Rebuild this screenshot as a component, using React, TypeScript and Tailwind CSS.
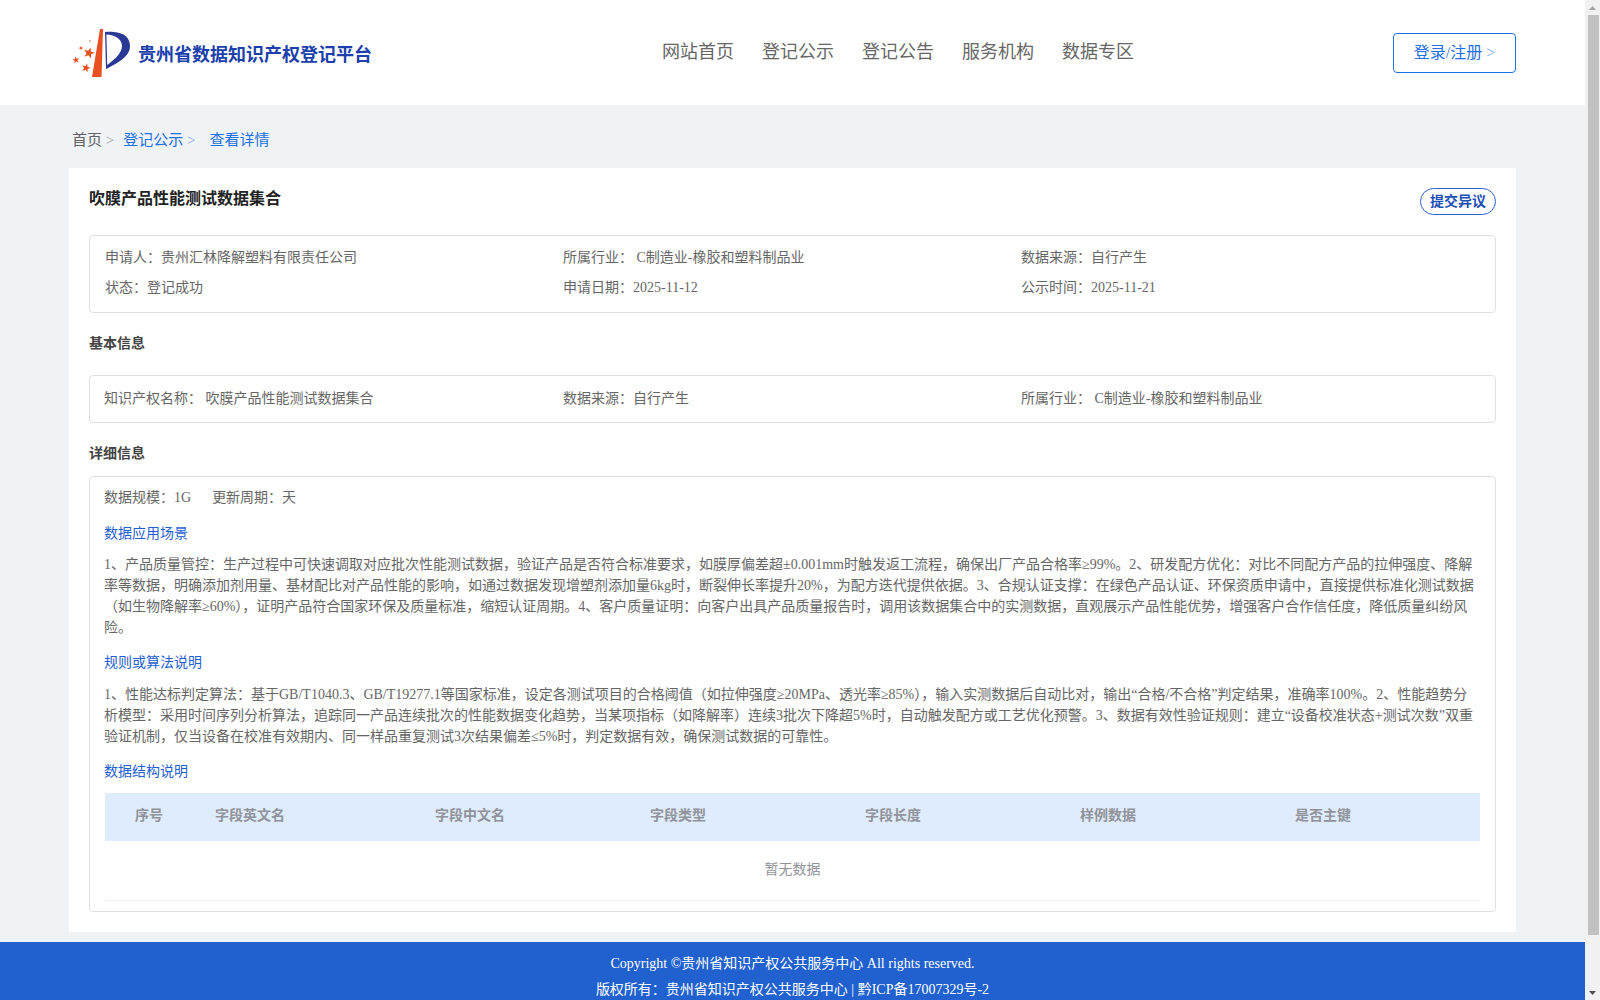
import React from 'react';

const font = 'font-["Liberation_Serif","Noto_Sans_CJK_SC",serif]';

const columns = [
  { label: '序号', w: 'w-[110px]', pl: 'pl-[30px]' },
  { label: '字段英文名', w: 'w-[220px]', pl: 'pl-0' },
  { label: '字段中文名', w: 'w-[215px]', pl: 'pl-0' },
  { label: '字段类型', w: 'w-[215px]', pl: 'pl-0' },
  { label: '字段长度', w: 'w-[215px]', pl: 'pl-0' },
  { label: '样例数据', w: 'w-[215px]', pl: 'pl-0' },
  { label: '是否主键', w: 'w-[150px]', pl: 'pl-0' },
];

// five pointed star for the logo
const starPoints = (cx: number, cy: number, r: number, rot: number) =>
  Array.from({ length: 10 }, (_, i) => {
    const radius = i % 2 === 0 ? r : r * 0.42;
    const a = ((rot + i * 36 - 90) * Math.PI) / 180;
    return `${(cx + radius * Math.cos(a)).toFixed(2)},${(cy + radius * Math.sin(a)).toFixed(2)}`;
  }).join(' ');

const Logo = () => (
  <svg width="66" height="58" viewBox="0 0 66 58" className="shrink-0">
    <polygon points="32,5 35,5 33.5,53 24,53" fill="#e8501f" />
    <path
      fillRule="evenodd"
      d="M37 8 C50 7 62 10 62 22 C62 33 49 39 38.5 45 L38 45 Z M38.4 10.5 L39.2 41 C47 35 54 29 54 22 C54 15 47 11 38.4 10.5 Z"
      fill="#2a3a94"
    />
    <polygon points={starPoints(21, 29, 5.8, 15)} fill="#e8501f" />
    <polygon points={starPoints(8, 36, 3.6, -10)} fill="#e8501f" />
    <polygon points={starPoints(18, 44, 4.6, 15)} fill="#e8501f" />
    <circle cx="13" cy="24" r="1.6" fill="#ee6a43" />
    <circle cx="22" cy="17" r="1.1" fill="#f0a48a" />
  </svg>
);

export default function App() {
  return (
    <div className={`${font} flex h-[1000px] overflow-hidden bg-[#eff3f6]`}>
      <div className="flex-1 min-w-0">
        {/* Header */}
        <header className="h-[105px] bg-white flex items-center pl-[68px] pr-[69px]">
          <div className="flex items-center w-[594px]">
            <Logo />
            <span className="ml-[4px] mt-[6px] text-[18px] font-bold text-[#1b3fab]">贵州省数据知识产权登记平台</span>
          </div>
          <nav className="flex gap-[28px] text-[18px] text-[#666] -mt-[1px]">
            <span>网站首页</span>
            <span>登记公示</span>
            <span>登记公告</span>
            <span>服务机构</span>
            <span>数据专区</span>
          </nav>
          <button className="ml-auto w-[123px] h-[40px] rounded-[4px] border border-[#1f6fe5] text-[16px] text-[#1f6fe5] bg-white">
            登录/注册 <span className="opacity-60">&gt;</span>
          </button>
        </header>

        {/* Breadcrumb */}
        <div className="h-[63px] pl-[72px] pt-[25px] text-[15px] leading-[20px] text-[#606266]">
          <span>首页 <span className="opacity-60">&gt;</span></span>
          <span className="ml-[9px] text-[#1f6fe5]">登记公示 <span className="opacity-60">&gt;</span></span>
          <span className="ml-[14px] text-[#1f6fe5]">查看详情</span>
        </div>

        <main className="mx-[69px] w-[1447px] h-[764px] bg-white px-[20px] pt-[20px]">
          <div className="flex justify-between h-[47px]">
            <h1 className="text-[16px] font-bold text-[#222] leading-[22px]">吹膜产品性能测试数据集合</h1>
            <button className="w-[76px] h-[27px] rounded-[14px] border border-[#2a62cf] text-[14px] font-bold text-[#1a4fb5] bg-white">提交异议</button>
          </div>

          <div className="h-[78px] rounded-[4px] border border-[#e0e0e0] pl-[15px] pt-[12px] text-[14px] text-[#666] leading-[20px]">
            <div className="grid grid-cols-[458px_458px_1fr] h-[30px]">
              <span>申请人：贵州汇林降解塑料有限责任公司</span>
              <span>所属行业： C制造业-橡胶和塑料制品业</span>
              <span>数据来源：自行产生</span>
            </div>
            <div className="grid grid-cols-[458px_458px_1fr]">
              <span>状态：登记成功</span>
              <span>申请日期：2025-11-12</span>
              <span>公示时间：2025-11-21</span>
            </div>
          </div>

          <h2 className="mt-[20px] h-[42px] text-[14px] font-bold text-[#444] leading-[22px]">基本信息</h2>

          <div className="h-[48px] rounded-[4px] border border-[#e0e0e0] pl-[14px] pb-[2px] flex items-center text-[14px] text-[#666]">
            <div className="grid grid-cols-[459px_458px_1fr] w-full">
              <span>知识产权名称： 吹膜产品性能测试数据集合</span>
              <span>数据来源：自行产生</span>
              <span>所属行业： C制造业-橡胶和塑料制品业</span>
            </div>
          </div>

          <h2 className="mt-[20px] h-[33px] text-[14px] font-bold text-[#444] leading-[22px]">详细信息</h2>

          <div className="h-[436px] rounded-[4px] border border-[#e0e0e0] pl-[14px] pr-[15px] pt-[11px] text-[14px] text-[#666]">
            <div className="leading-[20px]">
              数据规模：1G<span className="ml-[21px]">更新周期：天</span>
            </div>
            <h3 className="mt-[16px] text-[#1f5fd0] leading-[20px]">数据应用场景</h3>
            <p className="mt-[10px] leading-[21px]">1、产品质量管控：生产过程中可快速调取对应批次性能测试数据，验证产品是否符合标准要求，如膜厚偏差超±0.001mm时触发返工流程，确保出厂产品合格率≥99%。2、研发配方优化：对比不同配方产品的拉伸强度、降解率等数据，明确添加剂用量、基材配比对产品性能的影响，如通过数据发现增塑剂添加量6kg时，断裂伸长率提升20%，为配方迭代提供依据。3、合规认证支撑：在绿色产品认证、环保资质申请中，直接提供标准化测试数据（如生物降解率≥60%），证明产品符合国家环保及质量标准，缩短认证周期。4、客户质量证明：向客户出具产品质量报告时，调用该数据集合中的实测数据，直观展示产品性能优势，增强客户合作信任度，降低质量纠纷风险。</p>
            <h3 className="mt-[15px] text-[#1f5fd0] leading-[20px]">规则或算法说明</h3>
            <p className="mt-[11px] leading-[21px]">1、性能达标判定算法：基于GB/T1040.3、GB/T19277.1等国家标准，设定各测试项目的合格阈值（如拉伸强度≥20MPa、透光率≥85%），输入实测数据后自动比对，输出“合格/不合格”判定结果，准确率100%。2、性能趋势分析模型：采用时间序列分析算法，追踪同一产品连续批次的性能数据变化趋势，当某项指标（如降解率）连续3批次下降超5%时，自动触发配方或工艺优化预警。3、数据有效性验证规则：建立“设备校准状态+测试次数”双重验证机制，仅当设备在校准有效期内、同一样品重复测试3次结果偏差≤5%时，判定数据有效，确保测试数据的可靠性。</p>
            <h3 className="mt-[15px] text-[#1f5fd0] leading-[20px]">数据结构说明</h3>
            <div className="mt-[11px] ml-[1px]">
              <div className="flex h-[48px] items-center pb-[3px] bg-[#dfecfd] text-[14px] font-bold text-[#909399]">
                {columns.map((c) => (
                  <div key={c.label} className={`${c.w} ${c.pl} shrink-0`}>{c.label}</div>
                ))}
              </div>
              <div className="h-[60px] pb-[2px] border-b border-[#ebeef5] flex items-center justify-center text-[#909399]">暂无数据</div>
            </div>
          </div>
        </main>

        {/* Footer */}
        <footer className="mt-[10px] h-[58px] bg-[#2161cf] text-white text-[14px] text-center pt-[9px] leading-[26px]">
          <div>Copyright ©贵州省知识产权公共服务中心 All rights reserved.</div>
          <div>版权所有：贵州省知识产权公共服务中心 | 黔ICP备17007329号-2</div>
        </footer>
      </div>

      {/* Scrollbar */}
      <div className="w-[15px] shrink-0 bg-[#f1f1f1] flex flex-col items-center">
        <svg width="15" height="15" viewBox="0 0 15 15"><path d="M4 10 L7.5 6 L11 10 Z" fill="#a3a3a3" /></svg>
        <div className="w-[11px] h-[920px] bg-[#c1c1c1] ml-[2px]" />
        <svg width="15" height="15" viewBox="0 0 15 15" className="mt-auto"><path d="M4 6 L7.5 10 L11 6 Z" fill="#505050" /></svg>
      </div>
    </div>
  );
}
